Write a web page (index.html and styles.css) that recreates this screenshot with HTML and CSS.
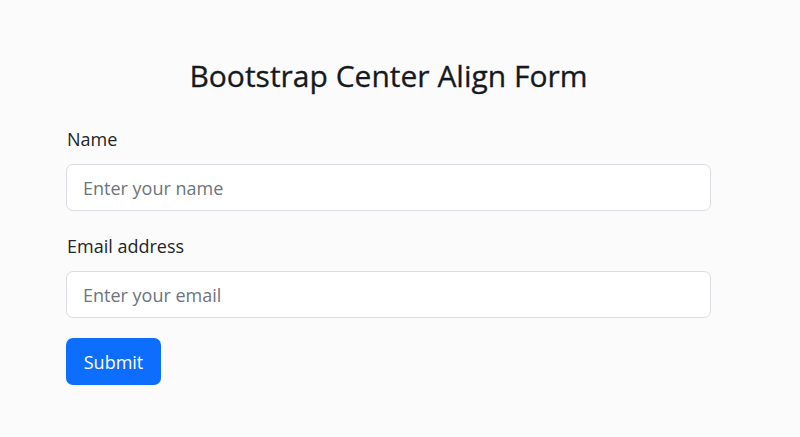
FILE: index.html
```html
<!DOCTYPE html>
<html>
<head>
<meta charset="utf-8">
<link rel="stylesheet" href="styles.css">
</head>
<body>
<div class="page">
  <h1 class="title">Bootstrap Center Align Form</h1>
  <form class="form">
    <div class="field">
      <label class="label" for="name">Name</label>
      <input class="input" id="name" type="text" placeholder="Enter your name">
    </div>
    <div class="field">
      <label class="label" for="email">Email address</label>
      <input class="input" id="email" type="email" placeholder="Enter your email">
    </div>
    <button class="btn" type="button">Submit</button>
  </form>
</div>
</body>
</html>
```
FILE: styles.css
```css
html, body {
  margin: 0;
  padding: 0;
  background: #fbfbfb;
}
body {
  font-family: "Open Sans", "Noto Sans", sans-serif;
  color: #212529;
  width: 800px;
  height: 437px;
  overflow: hidden;
}
.page {
  width: 645px;
  margin: 0 0 0 66px;
  padding-top: 56px;
}
.title {
  margin: 0 0 30px;
  text-align: center;
  font-size: 30px;
  font-weight: 500;
  line-height: 40px;
  color: #16191d;
  -webkit-text-stroke: 0.3px #16191d;
}
.form {
  display: flex;
  flex-direction: column;
}
.field {
  display: flex;
  flex-direction: column;
  margin-bottom: 22px;
}
.field + .btn {
  margin-top: -2px;
}
.label {
  font-size: 18px;
  line-height: 26px;
  margin-bottom: 12px;
  padding-left: 1px;
}
.input {
  box-sizing: border-box;
  height: 47px;
  width: 100%;
  border: 1.5px solid #dadde1;
  border-radius: 7px;
  background: #fff;
  padding: 0 16px;
  font-family: inherit;
  font-size: 18px;
  color: #212529;
  outline: none;
}
.input::placeholder {
  color: #6c757d;
}
.btn {
  align-self: flex-start;
  box-sizing: border-box;
  height: 47px;
  width: 95px;
  border: none;
  border-radius: 7px;
  background: #0d6efd;
  color: #fff;
  font-family: inherit;
  font-size: 18px;
  padding: 0;
}
```
